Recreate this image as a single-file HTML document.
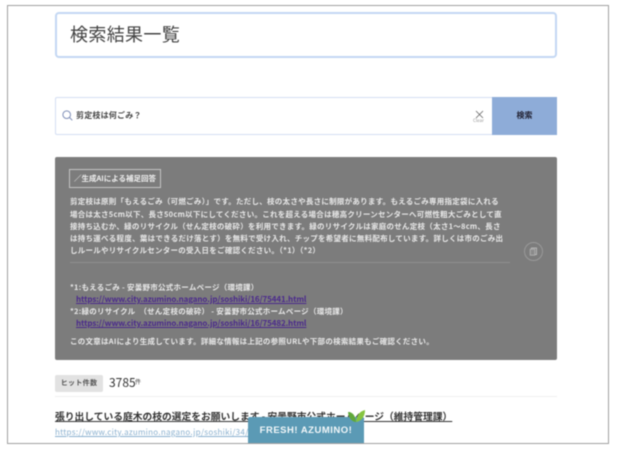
<!DOCTYPE html>
<html lang="ja">
<head>
<meta charset="utf-8">
<style>
html,body{margin:0;padding:0;background:#fff;width:617px;height:449px;overflow:hidden}
body{position:relative;font-family:"Noto Sans CJK JP","Liberation Sans",sans-serif;color:#333;filter:blur(.4px)}
div,a,span{position:absolute;white-space:nowrap}
a{text-decoration:underline}
.frame{left:7px;top:5px;width:600px;height:437px;border:1px solid #a0a0a0}
.title{left:55px;top:12px;width:498px;height:42px;border:2px solid #c3d7f3;border-radius:4px;background:#fff}
.titletext{left:70px;top:21px;font-size:18px;line-height:26px;color:#444;letter-spacing:.35px}
.search{left:55px;top:97px;width:436px;height:36px;border:1.5px solid #d5dff3;border-right:0;border-radius:2px 0 0 2px}
.stext{left:76px;top:110px;font-size:8px;line-height:12px;font-weight:bold;color:#444;letter-spacing:.2px}
.btn{left:492px;top:97px;width:65px;height:38px;background:#8eacd8;text-align:center;font-size:8px;line-height:38px;font-weight:bold;color:#223}
.clear{left:473px;top:119px;font-size:4.500px;line-height:5px;color:#999}
.panel{left:55px;top:157px;width:502px;height:203px;background:#7c7c7c;border-radius:2px}
.tag{left:69px;top:169px;width:90px;height:17px;border:1px solid #c4c4c4;color:#eee;font-size:7.500px;line-height:17px;font-weight:bold;text-align:center}
.t{left:70px;font-size:7.500px;line-height:13px;color:#e8e8e8;letter-spacing:.26px;font-weight:bold}
.l{left:76px;font-size:8px;line-height:13px;color:#4b2a8c;letter-spacing:-.11px;font-weight:bold}
.rule{left:70px;top:262px;width:440px;height:1px;background:#8f8f8f}
.hit{left:55px;top:375px;width:48px;height:17px;background:#e2e2e2;border-radius:2px;text-align:center;font-size:7px;line-height:17px;font-weight:bold;color:#555;letter-spacing:.3px}
.num{left:109px;top:374px;font-size:12px;line-height:18px;color:#333}
.ken{left:135px;top:377px;font-size:6px;line-height:10px;color:#444}
.sep{left:55px;top:396px;width:502px;height:1px;background:#f0f0f0}
.rtitle{left:55px;top:409px;font-size:9.750px;line-height:15px;font-weight:bold;color:#333;text-decoration:underline}
.rurl{left:55px;top:426px;font-size:8px;line-height:13px;color:#8ab0cf;letter-spacing:.28px;text-decoration:underline}
.fresh{left:248px;top:417px;width:116px;height:26px;background:#5b9ab5;border-radius:2px 2px 0 0;color:#f2f7f9;font-family:"Liberation Sans",sans-serif;font-size:9.500px;line-height:27px;font-weight:bold;text-align:center;letter-spacing:.5px}
svg{position:absolute;overflow:visible}
</style>
</head>
<body>
<div class="frame"></div>
<div class="title"></div>
<div class="titletext">検索結果一覧</div>

<div class="search"></div>
<svg style="left:62px;top:110px" width="11" height="11" viewBox="0 0 11 11"><circle cx="4.700" cy="4.700" r="3.800" fill="none" stroke="#7f8fb8" stroke-width="1"/><path d="M7.500 7.500L10.300 10.300" stroke="#7f8fb8" stroke-width="1"/></svg>
<div class="stext">剪定枝は何ごみ？</div>
<svg style="left:476px;top:111px" width="7" height="7" viewBox="0 0 7 7"><path d="M0 0L7 7M7 0L0 7" stroke="#666" stroke-width=".8" fill="none"/></svg>
<div class="clear">Clear</div>
<div class="btn">検索</div>

<div class="panel"></div>
<div class="tag">／生成AIによる補足回答</div>
<div class="t" style="top:195.300px">剪定枝は原則「もえるごみ（可燃ごみ）」です。ただし、枝の太さや長さに制限があります。もえるごみ専用指定袋に入れる</div>
<div class="t" style="top:207.500px">場合は太さ5cm以下、長さ50cm以下にしてください。これを超える場合は穂高クリーンセンターへ可燃性粗大ごみとして直</div>
<div class="t" style="top:219.700px">接持ち込むか、緑のリサイクル（せん定枝の破砕）を利用できます。緑のリサイクルは家庭のせん定枝（太さ1～8cm、長さ</div>
<div class="t" style="top:231.900px">は持ち運べる程度、葉はできるだけ落とす）を無料で受け入れ、チップを希望者に無料配布しています。詳しくは市のごみ出</div>
<div class="t" style="top:244.100px">しルールやリサイクルセンターの受入日をご確認ください。（*1）（*2）</div>
<div class="rule"></div>
<svg style="left:524px;top:242px" width="19" height="19" viewBox="0 0 19 19"><circle cx="9.500" cy="9.500" r="9" fill="none" stroke="#9a9a9a" stroke-width="1"/><rect x="7.500" y="6" width="5" height="6.500" fill="none" stroke="#b5b5b5" stroke-width="1"/><rect x="6.200" y="7.200" width="4.600" height="6" fill="#8a8a8a" stroke="#b5b5b5" stroke-width=".8"/></svg>

<div class="t" style="top:281.200px">*1:もえるごみ - 安曇野市公式ホームページ（環境課）</div>
<a class="l" style="top:292.800px">https://www.city.azumino.nagano.jp/soshiki/16/75441.html</a>
<div class="t" style="top:305.200px">*2:緑のリサイクル　（せん定枝の破砕） - 安曇野市公式ホームページ（環境課）</div>
<a class="l" style="top:316.800px">https://www.city.azumino.nagano.jp/soshiki/16/75482.html</a>
<div class="t" style="top:335.200px">この文章はAIにより生成しています。詳細な情報は上記の参照URLや下部の検索結果もご確認ください。</div>

<div class="hit">ヒット件数</div>
<div class="num">3785</div>
<div class="ken">件</div>
<div class="sep"></div>
<div class="rtitle">張り出している庭木の枝の選定をお願いします - 安曇野市公式ホームページ（維持管理課）</div>
<div class="rurl">https://www.city.azumino.nagano.jp/soshiki/34/3937.html</div>
<div class="fresh">FRESH! AZUMINO!</div>
<svg style="left:348px;top:409px" width="18" height="14" viewBox="0 0 18 14"><path d="M0 3C5 3 7.500 7 8 13C4 13 .5 9 0 3Z" fill="#5fa83a"/><path d="M17 1C17 7 14 12 8 13C8.500 7 11 2.500 17 1Z" fill="#86c440"/></svg>
</body>
</html>
